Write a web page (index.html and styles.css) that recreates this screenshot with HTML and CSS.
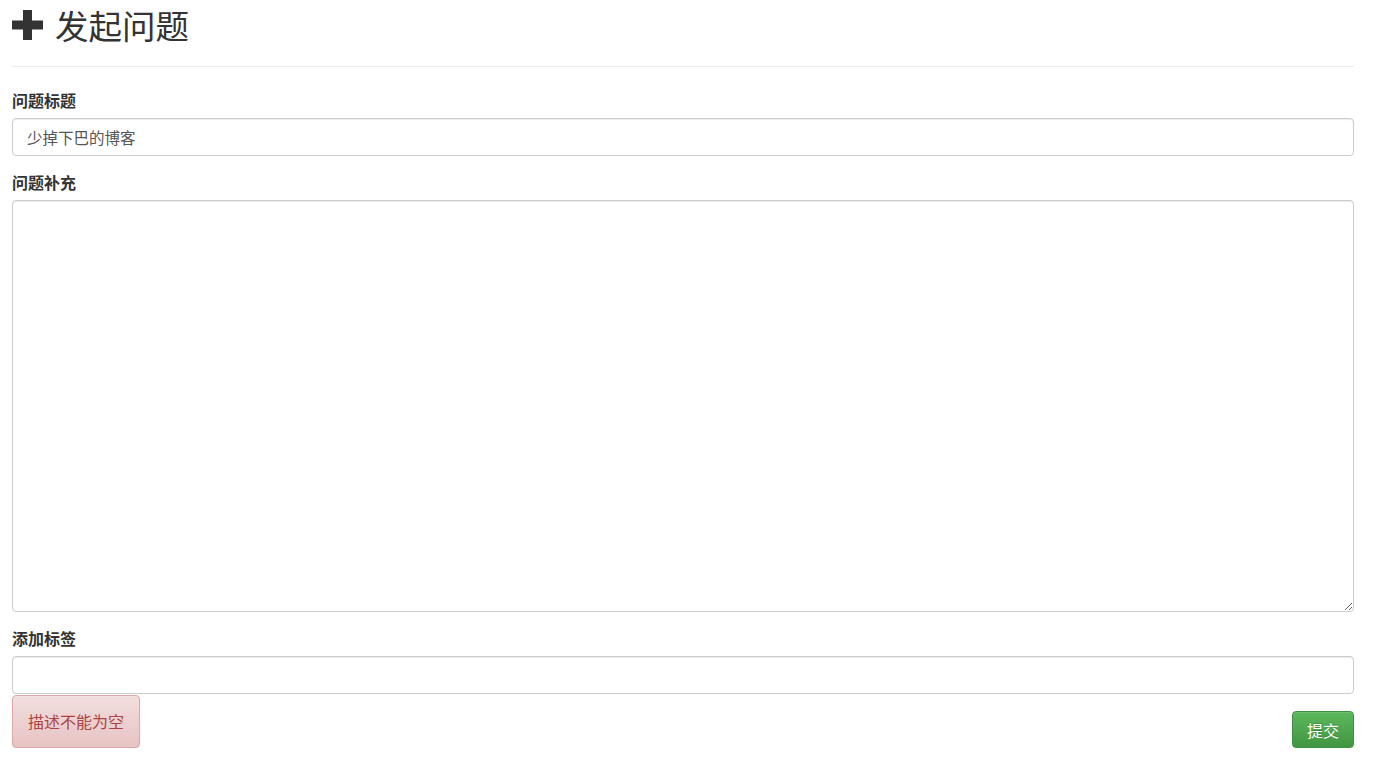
FILE: index.html
```html
<!DOCTYPE html>
<html lang="zh-CN">
<head>
<meta charset="utf-8">
<title>发起问题</title>
<link rel="stylesheet" href="styles.css">
</head>
<body>
<div class="page">
  <div class="page-header">
    <h1 class="title">
      <svg class="plus" width="31" height="30" viewBox="0 0 31 30" aria-hidden="true">
        <rect x="11" y="0" width="9" height="30" fill="#333"/>
        <rect x="0" y="10.5" width="31" height="9" fill="#333"/>
      </svg>
      <span>发起问题</span>
    </h1>
  </div>
  <form class="form">
    <div class="form-group">
      <label class="label" for="t">问题标题</label>
      <input class="control" id="t" type="text" value="少掉下巴的博客">
    </div>
    <div class="form-group">
      <label class="label" for="d">问题补充</label>
      <textarea class="control area" id="d"></textarea>
    </div>
    <div class="form-group last">
      <label class="label" for="g">添加标签</label>
      <input class="control" id="g" type="text">
    </div>
    <div class="actions">
      <div class="alert">描述不能为空</div>
      <button class="btn" type="button">提交</button>
    </div>
  </form>
</div>
</body>
</html>
```
FILE: styles.css
```css
* { box-sizing: border-box; }
html, body { margin: 0; padding: 0; background: #fff; }
body {
  font-family: "Noto Sans CJK SC", "Liberation Sans", sans-serif;
  color: #333;
  font-size: 14px;
}
.page {
  width: 1342px;
  margin-left: 12px;
}
.page-header {
  padding-top: 5px;
  padding-bottom: 21px;
  border-bottom: 1px solid #eee;
}
.title {
  margin: 0;
  height: 40px;
  display: flex;
  align-items: center;
  gap: 12px;
  font-size: 33.5px;
  font-weight: 400;
  line-height: 40px;
  color: #333;
}
.plus { display: block; flex: none; }
.form { padding-top: 22px; }
.form-group { margin-bottom: 15px; }
.form-group.last { margin-bottom: 1px; }
.label {
  display: block;
  font-size: 16px;
  line-height: 22px;
  font-weight: 700;
  margin-bottom: 7px;
  color: #333;
}
.control {
  display: block;
  width: 100%;
  height: 38px;
  padding: 6px 14px;
  font-family: "Noto Sans CJK SC", "Liberation Sans", sans-serif;
  font-size: 15.5px;
  color: #555;
  background: #fff;
  border: 1px solid #ccc;
  border-radius: 4px;
  box-shadow: inset 0 1px 1px rgba(0,0,0,0.075);
  outline: none;
}
.area {
  height: 412px;
  resize: vertical;
}
.actions {
  display: flex;
  justify-content: space-between;
  align-items: flex-end;
}
.alert {
  padding: 15px 15px 16px;
  font-size: 16px;
  line-height: 20px;
  color: #a94442;
  background: linear-gradient(to bottom, #f2dede 0%, #e7c3c3 100%);
  border: 1px solid #dca7a7;
  border-radius: 4px;
  box-shadow: inset 0 1px 0 rgba(255,255,255,0.25), 0 1px 2px rgba(0,0,0,0.05);
}
.btn {
  height: 37px;
  padding: 0 14px;
  font-family: "Noto Sans CJK SC", "Liberation Sans", sans-serif;
  font-size: 16px;
  line-height: 20px;
  color: #fff;
  background: linear-gradient(to bottom, #5cb85c 0%, #419641 100%);
  border: 1px solid #3e8f3e;
  border-radius: 4px;
  text-shadow: 0 -1px 0 rgba(0,0,0,0.2);
  box-shadow: inset 0 1px 0 rgba(255,255,255,0.15), 0 1px 1px rgba(0,0,0,0.075);
}
```
